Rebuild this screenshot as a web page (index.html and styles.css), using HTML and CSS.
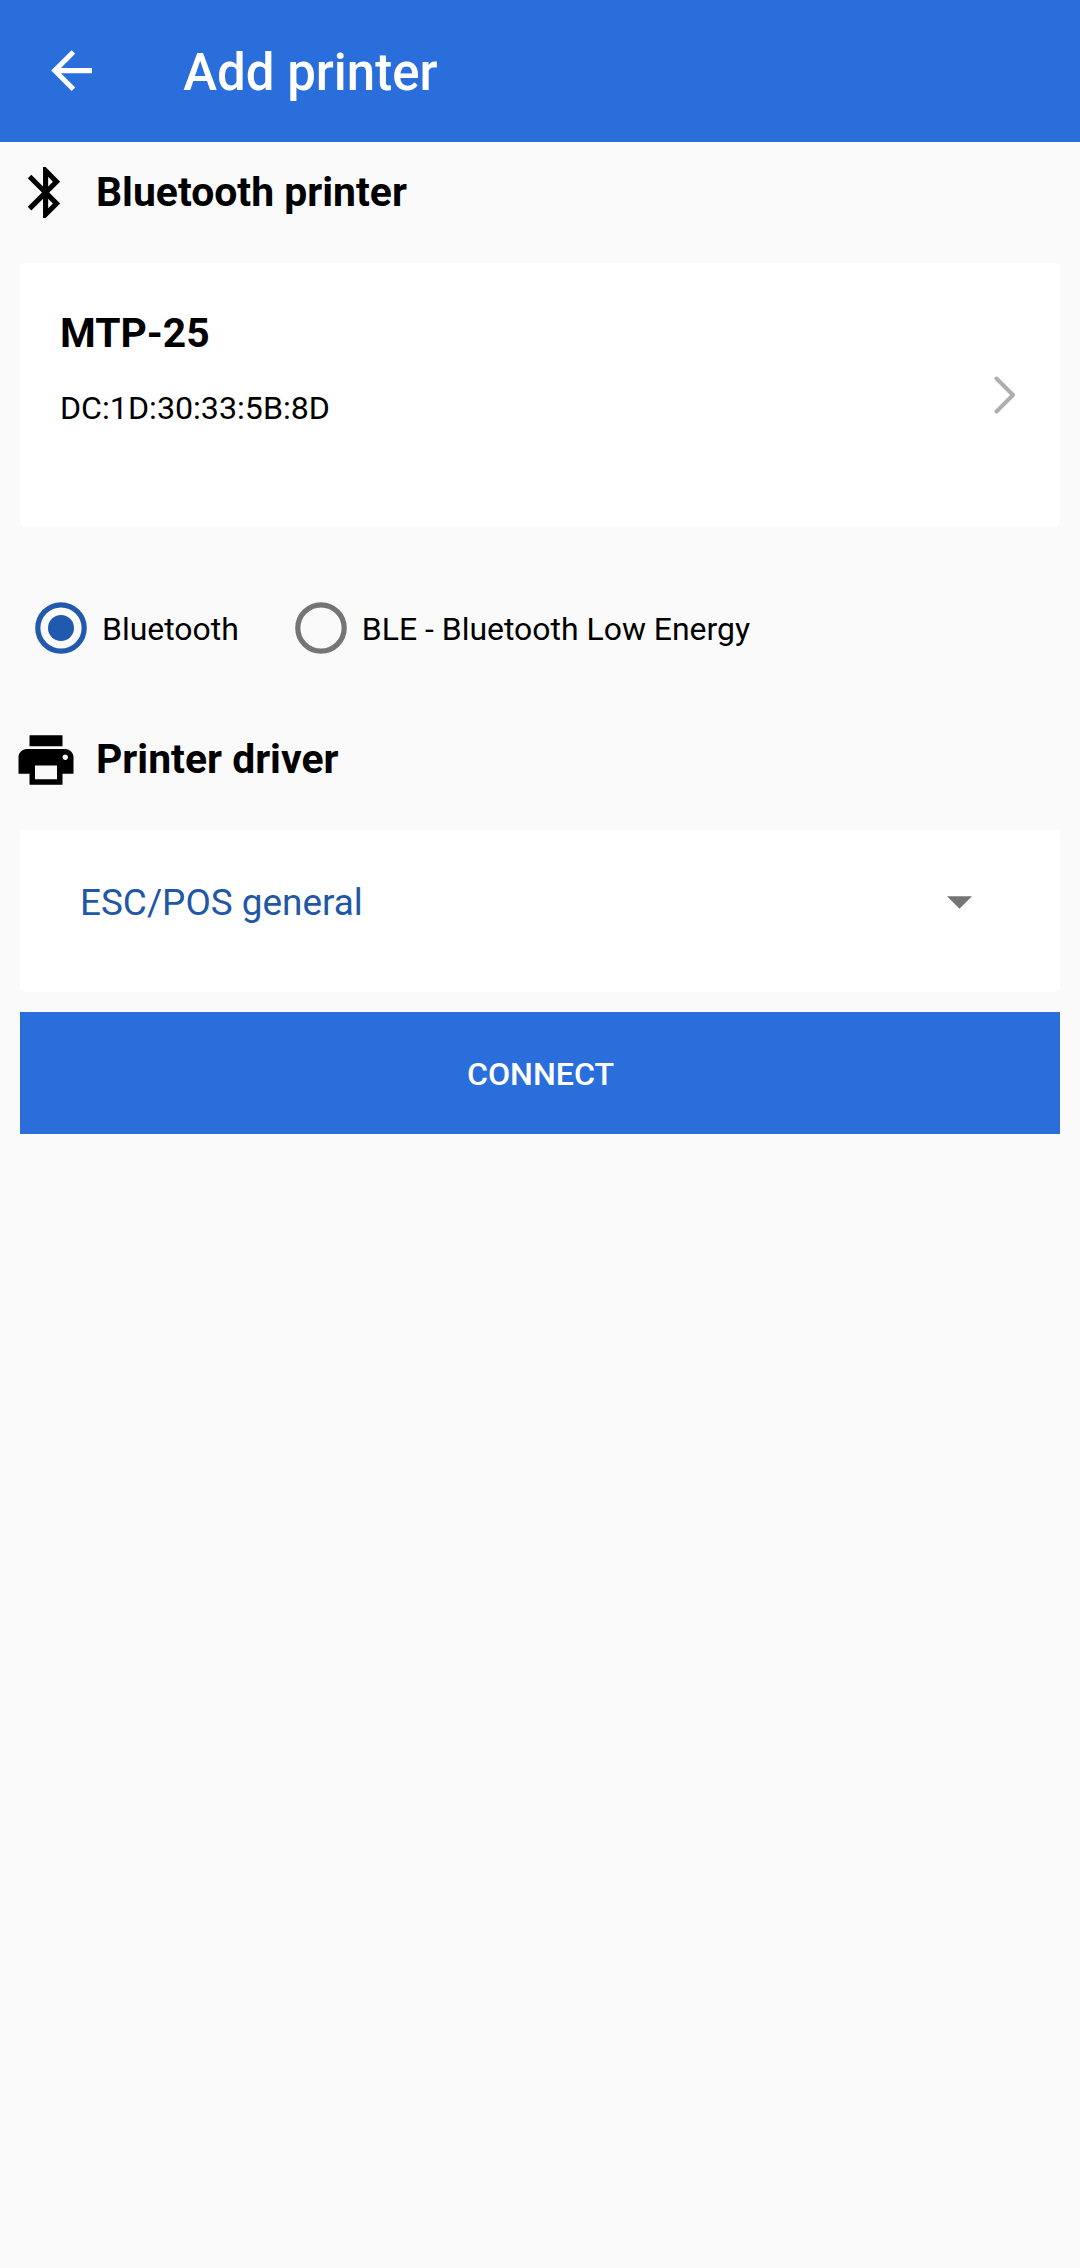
FILE: index.html
```html
<!DOCTYPE html>
<html lang="en">
<head>
<meta charset="utf-8">
<title>Add printer</title>
<link rel="stylesheet" href="styles.css">
</head>
<body>
<header class="app-bar">
  <svg class="back-icon" viewBox="0 0 24 24"><path d="M20 11H7.83l5.59-5.59L12 4l-8 8 8 8 1.41-1.41L7.83 13H20v-2z"/></svg>
  <h1 class="title">Add printer</h1>
</header>
<main class="content">
  <h2 class="section">
    <span class="section-icon"><svg class="bluetooth-icon" viewBox="0 0 24 24"><path d="M17.71 7.71L12 2h-1v7.59L6.41 5 5 6.41 10.59 12 5 17.59 6.41 19 11 14.41V22h1l5.71-5.71-4.3-4.29 4.3-4.29zM13 5.83l1.88 1.88L13 9.59V5.83zm1.88 10.46L13 18.17v-3.76l1.88 1.88z"/></svg></span>
    <span class="section-label">Bluetooth printer</span>
  </h2>
  <section class="card device">
    <div class="device-text">
      <div class="device-name">MTP-25</div>
      <div class="device-address">DC:1D:30:33:5B:8D</div>
    </div>
    <svg class="chevron" viewBox="0 0 22 38"><path d="M2.5 2.5 19 19 2.5 35.5"/></svg>
  </section>
  <div class="radios">
    <label class="radio">
      <svg class="radio-icon checked" viewBox="0 0 52 52"><circle class="ring" cx="26" cy="26" r="23.2"/><circle class="dot" cx="26" cy="26" r="13"/></svg>
      <span class="radio-label">Bluetooth</span>
    </label>
    <label class="radio">
      <svg class="radio-icon" viewBox="0 0 52 52"><circle class="ring" cx="26" cy="26" r="23.2"/></svg>
      <span class="radio-label">BLE - Bluetooth Low Energy</span>
    </label>
  </div>
  <h2 class="section">
    <span class="section-icon"><svg class="print-icon" viewBox="0 0 24 24"><path d="M19 8H5c-1.66 0-3 1.34-3 3v6h4v4h12v-4h4v-6c0-1.66-1.34-3-3-3zm-3 11H8v-5h8v5zm3-7c-.55 0-1-.45-1-1s.45-1 1-1 1 .45 1 1-.45 1-1 1zm-1-9H6v4h12V3z"/></svg></span>
    <span class="section-label">Printer driver</span>
  </h2>
  <section class="card driver">
    <span class="driver-name">ESC/POS general</span>
    <svg class="caret" viewBox="0 0 26 13"><path d="M0 0h26L13 13z"/></svg>
  </section>
  <button class="connect" type="button">CONNECT</button>
</main>
</body>
</html>
```
FILE: styles.css
```css
* {
  box-sizing: border-box;
}

body {
  margin: 0;
  min-height: 2268px;
  background: #fafafa;
  color: #000;
  font-family: Roboto, sans-serif;
}

svg {
  display: block;
  flex: none;
}

.app-bar {
  display: flex;
  align-items: center;
  height: 142px;
  padding-left: 41px;
  background: #2a6edb;
  color: #fff;
}

.back-icon {
  width: 61.2px;
  height: 61.2px;
  fill: #fff;
}

.title {
  margin: 3px 0 0 81px;
  font-size: 51px;
  font-weight: 500;
  line-height: 60px;
}

.content {
  display: flex;
  flex-direction: column;
  padding: 0 20px;
}

.section {
  display: flex;
  align-items: center;
  height: 101px;
  margin: 0 0 20px -20px;
  font-size: 40.9px;
  font-weight: 700;
  line-height: 48px;
}

.section-icon {
  display: flex;
  justify-content: center;
  width: 91px;
  margin-right: 5px;
}

.section-label {
  padding-bottom: 2px;
}

.bluetooth-icon {
  width: 61.2px;
  height: 61.2px;
}

.print-icon {
  width: 66px;
  height: 66px;
}

.card {
  display: flex;
  background: #fff;
  border-radius: 5px;
}

.device {
  align-items: center;
  justify-content: space-between;
  height: 264px;
  padding: 0 44px 0 40px;
}

.device-text {
  margin-top: -54px;
}

.device-name {
  font-size: 40.8px;
  font-weight: 700;
  line-height: 48px;
}

.device-address {
  margin-top: 32px;
  font-size: 32.2px;
  line-height: 38px;
}

.chevron {
  width: 22px;
  height: 38px;
  fill: none;
  stroke: #aeaeae;
  stroke-width: 4;
  stroke-linecap: round;
  stroke-linejoin: round;
}

.radios {
  display: flex;
  gap: 56px;
  height: 182px;
  padding: 20px 0 0 15px;
  align-items: center;
}

.radio {
  display: flex;
  align-items: center;
  gap: 15px;
  font-size: 31.95px;
  line-height: 38px;
}

.radio-label {
  padding-top: 2px;
}

.radio-icon {
  width: 52px;
  height: 52px;
  fill: #757575;
  stroke: #757575;
}

.radio-icon.checked {
  fill: #2159ae;
  stroke: #2159ae;
}

.ring {
  fill: none;
  stroke-width: 5.2;
}

.dot {
  stroke: none;
}

.driver {
  height: 162px;
  padding: 0 88px 18px 60px;
  align-items: center;
  justify-content: space-between;
}

.driver-name {
  padding-top: 2px;
  color: #2257a5;
  font-size: 36.9px;
  line-height: 44px;
}

.caret {
  width: 25px;
  height: 13px;
  fill: #757575;
}

.connect {
  height: 122px;
  margin: 20px 0 0;
  padding: 1px 0 0 1px;
  border: 0;
  background: #2a6edb;
  color: #fff;
  font: 500 32.2px/38px Roboto, sans-serif;
}
```
